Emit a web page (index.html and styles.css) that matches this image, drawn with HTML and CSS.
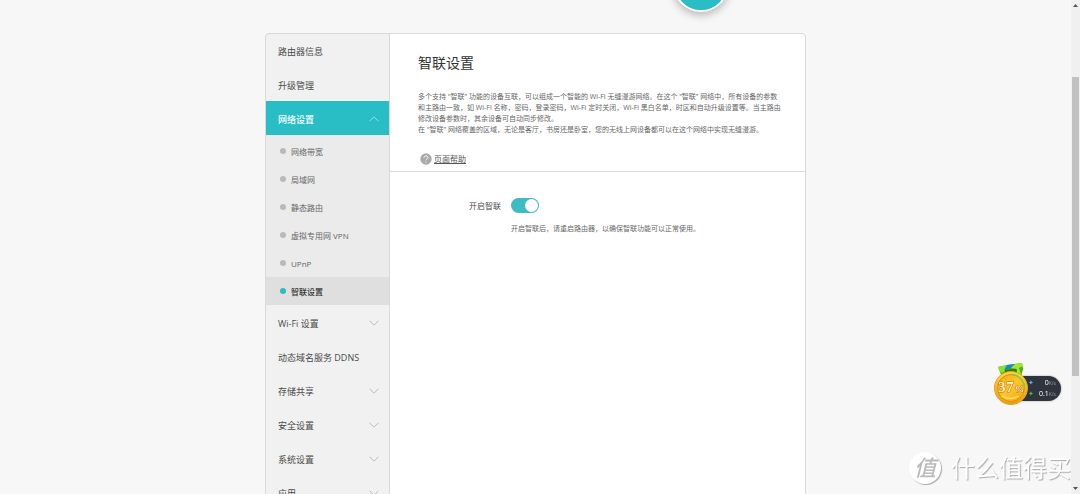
FILE: index.html
```html
<!DOCTYPE html>
<html lang="zh-CN">
<head>
<meta charset="utf-8">
<title>智联设置</title>
<link rel="stylesheet" href="styles.css">
</head>
<body>
<div class="viewport">
  <div class="page">
    <header class="top"><span class="orb"></span></header>
    <div class="card">
      <nav class="menu">
        <a class="item" href="#">路由器信息</a>
        <a class="item" href="#">升级管理</a>
        <a class="item open" href="#">网络设置<svg class="chev" viewBox="0 0 10 6"><path d="M0.5 5.3 5 0.8 9.5 5.3"/></svg></a>
        <div class="sub">
          <a class="subitem" href="#">网络带宽</a>
          <a class="subitem" href="#">局域网</a>
          <a class="subitem" href="#">静态路由</a>
          <a class="subitem" href="#">虚拟专用网 VPN</a>
          <a class="subitem" href="#">UPnP</a>
          <a class="subitem current" href="#">智联设置</a>
        </div>
        <a class="item" href="#">Wi-Fi 设置<svg class="chev" viewBox="0 0 10 6"><path d="M0.5 0.7 5 5.2 9.5 0.7"/></svg></a>
        <a class="item" href="#">动态域名服务 DDNS</a>
        <a class="item" href="#">存储共享<svg class="chev" viewBox="0 0 10 6"><path d="M0.5 0.7 5 5.2 9.5 0.7"/></svg></a>
        <a class="item" href="#">安全设置<svg class="chev" viewBox="0 0 10 6"><path d="M0.5 0.7 5 5.2 9.5 0.7"/></svg></a>
        <a class="item" href="#">系统设置<svg class="chev" viewBox="0 0 10 6"><path d="M0.5 0.7 5 5.2 9.5 0.7"/></svg></a>
        <a class="item" href="#">应用<svg class="chev" viewBox="0 0 10 6"><path d="M0.5 0.7 5 5.2 9.5 0.7"/></svg></a>
      </nav>
      <main class="content">
        <section class="intro">
          <h1 class="title">智联设置</h1>
          <p class="desc">多个支持<span class="term">“智联”</span>功能的设备互联，可以组成一个智能的 Wi-Fi 无缝漫游网络。在这个<span class="term">“智联”</span>网络中，所有设备的参数<br>和主路由一致，如 Wi-Fi 名称，密码，登录密码，Wi-Fi 定时关闭，Wi-Fi 黑白名单，时区和自动升级设置等。当主路由<br>修改设备参数时，其余设备可自动同步修改。<br>在<span class="term">“智联”</span>网络覆盖的区域，无论是客厅，书房还是卧室，您的无线上网设备都可以在这个网络中实现无缝漫游。</p>
          <a class="help" href="#"><svg class="help-icon" viewBox="0 0 12 12"><circle cx="6" cy="6" r="5.7"/><path d="M4 4.6C4 2.3 8 2.3 8 4.5 8 6 6 5.9 6 7.4M6 8.6V9.6"/></svg><span class="help-text">页面帮助</span></a>
        </section>
        <section class="form">
          <label class="label" for="link">开启智联</label>
          <input class="switch" id="link" type="checkbox" role="switch" checked>
          <p class="note">开启智联后，请重启路由器，以确保智联功能可以正常使用。</p>
        </section>
      </main>
    </div>
  </div>
  <div class="scroll">
    <svg class="arrow" viewBox="0 0 5 3"><path d="M0 3 2.5 0 5 3Z"/></svg>
    <div class="track"><div class="thumb"></div></div>
    <svg class="arrow" viewBox="0 0 5 3"><path d="M0 0 2.5 3 5 0Z"/></svg>
  </div>
</div>
<aside class="speed">
  <div class="rates">
    <span class="rate"><i class="up">✦</i><span class="value">0<small>K/s</small></span></span>
    <span class="rate"><i class="down">✦</i><span class="value">0.1<small>K/s</small></span></span>
  </div>
  <svg class="medal" viewBox="0 0 36 44">
    <defs>
      <linearGradient id="gold" x1="0" y1="0" x2="0" y2="1"><stop offset="0" stop-color="#ffd83a"/><stop offset="1" stop-color="#ef9c08"/></linearGradient>
      <linearGradient id="face" x1="0" y1="0" x2="1" y2="1"><stop offset="0" stop-color="#f3a916"/><stop offset=".5" stop-color="#fcc52c"/><stop offset="1" stop-color="#f0a512"/></linearGradient>
    </defs>
    <path fill="#4aab18" d="M5 5 14 3 29 1 30 7 28 15H9Z"/>
    <path fill="#8de229" d="M5 5 14 3 11 10 8 11Z"/>
    <path fill="#1589d0" d="M14 3 22 2 18 6 11 8Z"/>
    <path fill="#a0e82c" d="M22 2 29 1 30 4 26 6 28 12 24 12 24 7 18 6Z"/>
    <path fill="#2f7912" d="M12 8 23 7 24 12H12Z"/>
    <circle cx="18" cy="26" r="16.5" fill="url(#gold)" stroke="#e0a02a"/>
    <circle cx="18" cy="26" r="13.5" fill="url(#face)" stroke="#dc900f" stroke-width="1"/>
    <path d="M18 12.5A13.5 13.5 0 0 1 31.5 26" fill="none" stroke="#80c943" stroke-width="1.4"/>
    <path d="M9 34Q17 39 26 34" fill="none" stroke="#ffe36b" stroke-width="1.3"/>
    <text class="score" x="5" y="30">3</text><text class="score" x="13" y="30">7</text><text class="percent" x="22" y="30">%</text>
  </svg>
</aside>
<div class="brand"><span class="seal">值</span><span class="brand-name">什么值得买</span></div>
</body>
</html>
```
FILE: styles.css
```css
* { box-sizing: border-box; }
body {
  margin: 0;
  height: 100vh;
  overflow: hidden;
  background: #f7f7f7;
  color: #4a4a4a;
  font-family: "Open Sans", "Noto Sans CJK SC", sans-serif;
  font-size: 9px;
}
a { color: inherit; text-decoration: none; }
.viewport { display: flex; height: 100vh; }
.page { flex: 1; display: flex; flex-direction: column; align-items: center; overflow: hidden; }
.top { flex: none; height: 33px; width: 100%; max-width: 541px; position: relative; }
.orb {
  position: absolute;
  right: 77px;
  bottom: 21px;
  width: 56px;
  height: 56px;
  border: 2px solid #fff;
  border-radius: 50%;
  background: #29bec6;
  box-shadow: 0 3px 9px rgba(0, 0, 0, .28);
}
.card {
  flex: none;
  display: flex;
  width: 100%;
  max-width: 541px;
  border: 1px solid #d9d9d9;
  border-radius: 4px 4px 0 0;
  background: #fff;
}
.menu { flex: none; width: 124px; margin-top: -1px; padding-bottom: 34px; background: #f1f1f1; border-top: 1px solid #d9d9d9; border-right: 1px solid #d9d9d9; border-radius: 4px 0 0 0; }
.item { display: flex; align-items: center; justify-content: space-between; height: 34px; padding: 2px 10px 0 12px; }
.item:first-child { height: 33px; }
.open { background: #29bec6; color: #fff; font-weight: 500; }
.chev { width: 10px; height: 6px; fill: none; stroke: #bcbcbc; stroke-width: 1; }
.open .chev { stroke: #91e3e7; }
.sub { padding-top: 2px; background: #ebebeb; }
.subitem { display: flex; align-items: center; gap: 5px; height: 28px; padding: 0 14px; font-size: 8px; color: #666; }
.subitem::before { content: ""; width: 6px; height: 6px; border-radius: 50%; background: #b9b9b9; }
.current { background: #dfdfdf; color: #333; font-weight: 500; }
.current::before { background: #29bec6; }
.content { flex: 1; min-width: 0; }
.intro { padding: 18px 28px 6px; border-bottom: 1px solid #d9d9d9; }
.title { margin: 0; font-size: 14px; line-height: 22px; font-weight: 400; color: #333; }
.desc { margin: 17px 0 0; font-size: 7px; line-height: 11px; color: #666; white-space: nowrap; }
.term { margin: 0 2px; }
.help { display: flex; align-items: center; gap: 2px; margin: 18px 0 0 2px; font-size: 8px; line-height: 12px; color: #555; }
.help-icon { width: 12px; height: 12px; fill: #aaa; }
.help-icon path { fill: none; stroke: #fff; stroke-width: 1; }
.help-text { text-decoration: underline; }
.form { display: grid; grid-template-columns: 111px 1fr; column-gap: 10px; row-gap: 10px; align-items: center; padding-top: 26px; }
.label { text-align: right; font-size: 8px; line-height: 12px; }
.switch { appearance: none; display: flex; justify-content: flex-end; width: 28px; height: 15px; margin: 0; padding: 1px; border-radius: 8px; background: #3dbdc3; }
.switch::before { content: ""; width: 13px; height: 13px; border-radius: 50%; background: #fff; }
.switch:not(:checked) { justify-content: flex-start; background: #bbb; }
.note { grid-column: 2; margin: 0; font-size: 7px; line-height: 11px; color: #666; white-space: nowrap; }
.scroll { flex: none; display: flex; flex-direction: column; align-items: center; width: 9px; padding: 4px 0; background: #f0f0f0; }
.arrow { width: 5px; height: 3px; fill: #555; }
.track { flex: 1; width: 7px; padding-top: 70px; }
.thumb { height: 73%; background: #c1c1c1; }
.speed { position: fixed; right: 19px; bottom: 88px; display: flex; align-items: flex-end; }
.rates { width: 44px; height: 25px; margin-bottom: 5px; display: flex; flex-direction: column; justify-content: space-between; padding: 2px 5px 2px 11px; border-radius: 0 13px 13px 0; background: #30343f; box-shadow: 0 0 2px #999; color: #fff; font-size: 7px; line-height: 10px; }
.rate { display: flex; justify-content: space-between; }
.rate i { font-style: normal; font-family: "DejaVu Sans", sans-serif; }
.rate small { font-size: 5px; color: #999; }
.up { color: #45b9ed; }
.down { color: #3bc24e; }
.medal { order: -1; width: 36px; height: 44px; margin-right: -12px; z-index: 1; }
.score { font: bold 15px "Liberation Serif", serif; fill: #fff3c4; stroke: #b87a1c; stroke-width: 1; paint-order: stroke; }
.percent { font: bold 9px "Liberation Serif", serif; fill: #fff3c4; stroke: #b87a1c; stroke-width: 1; paint-order: stroke; }
.brand { position: fixed; right: 9px; bottom: 10px; display: flex; align-items: center; gap: 10px; color: #fff; font-size: 24px; line-height: 32px; text-shadow: 1px 1px 1px #aaa; }
.seal { width: 32px; height: 32px; border-radius: 50%; background: #fff; box-shadow: 1px 1px 1px #aaa; color: #bbb; font-size: 22px; line-height: 30px; text-align: center; text-shadow: none; font-weight: 500; font-style: italic; }
```
